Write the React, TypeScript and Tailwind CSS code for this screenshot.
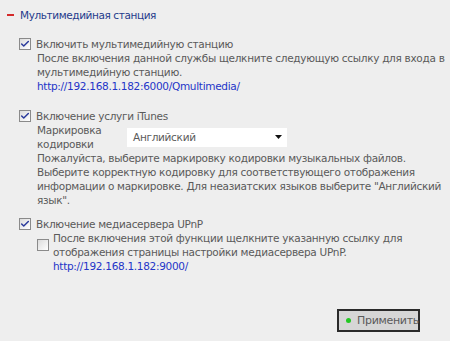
import { Check } from 'lucide-react'

const font = { fontFamily: '"DejaVu Sans", Verdana, sans-serif' }

function Box({ checked }: { checked: boolean }) {
  return (
    <span className="flex h-[12px] w-[12px] shrink-0 items-center justify-center border border-[#8a8a8a] bg-gradient-to-br from-[#dcdcdc] to-white">
      {checked && <Check className="h-[10px] w-[10px] text-[#2a3a9c]" strokeWidth={3.5} />}
    </span>
  )
}

export default function App() {
  return (
    <div
      className="h-[341px] w-[450px] overflow-hidden whitespace-nowrap bg-[#eeeeee] text-[10.5px] leading-[14px] tracking-[-0.3px] text-[#5a5a5a]"
      style={font}
    >
      <div className="flex items-center pl-[7px] pt-[8px]">
        <span className="mr-[6px] h-[2px] w-[7px] bg-[#d42a2a]" />
        <span className="text-[10.5px] leading-[14px] tracking-[-0.4px] text-[#1f3b8c]">Мультимедийная станция</span>
      </div>

      <div className="mt-[15px] pl-[19px]">
        <div className="flex items-center gap-[5px]">
          <Box checked />
          <span>Включить мультимедийную станцию</span>
        </div>
        <div className="pl-[18px]">
          <p>
            После включения данной службы щелкните следующую ссылку для входа в
            <br />
            мультимедийную станцию.
          </p>
          <a className="block text-[#2435c8]">http://192.168.1.182:6000/Qmultimedia/</a>
        </div>
      </div>

      <div className="mt-[16px] pl-[19px]">
        <div className="flex items-center gap-[5px]">
          <Box checked />
          <span>Включение услуги iTunes</span>
        </div>
        <div className="pl-[18px]">
          <div className="flex items-center">
            <span className="w-[90px]">
              Маркировка
              <br />
              кодировки
            </span>
            <div className="flex h-[19px] w-[160px] items-center justify-between bg-white pl-[6px] pr-[5px]">
              <span>Английский</span>
              <svg width="7" height="4" viewBox="0 0 7 4">
                <path d="M0 0h7L3.5 4z" fill="#111" />
              </svg>
            </div>
          </div>
          <p>
            Пожалуйста, выберите маркировку кодировки музыкальных файлов.
            <br />
            Выберите корректную кодировку для соответствующего отображения
            <br />
            информации о маркировке. Для неазиатских языков выберите "Английский
            <br />
            язык".
          </p>
        </div>
      </div>

      <div className="mt-[10px] pl-[19px]">
        <div className="flex items-center gap-[5px]">
          <Box checked />
          <span>Включение медиасервера UPnP</span>
        </div>
        <div className="flex pl-[18px]">
          <div className="mt-[8px] mr-[4px]">
            <Box checked={false} />
          </div>
          <div>
            <p>
              После включения этой функции щелкните указанную ссылку для
              <br />
              отображения страницы настройки медиасервера UPnP.
            </p>
            <a className="block text-[#2435c8]">http://192.168.1.182:9000/</a>
          </div>
        </div>
      </div>

      <div className="mt-[36px] flex justify-end pr-[30px]">
        <button className="flex h-[23px] w-[83px] items-center gap-[6px] border-2 border-[#2a2a2a] bg-[#d6d6d6] pl-[7px] text-[11px] text-[#5a5a5a]">
          <span className="h-[5px] w-[5px] shrink-0 rounded-full bg-[#22c822]" />
          Применить
        </button>
      </div>
    </div>
  )
}
